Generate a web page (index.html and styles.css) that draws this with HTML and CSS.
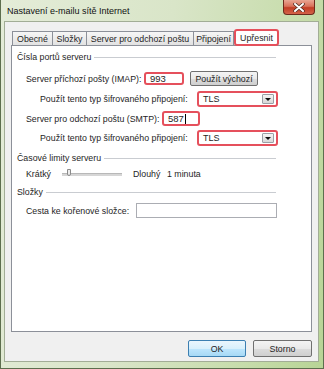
FILE: index.html
```html
<!DOCTYPE html>
<html lang="cs">
<head>
  <meta charset="UTF-8" />
  <title>Nastavení e-mailu sítě Internet</title>
  <link rel="stylesheet" href="styles.css">
</head>
<body>

<div class="window">
  <div class="titlebar">
    <span class="title">Nastavení e-mailu sítě Internet</span>
    <div class="close-btn">
      <svg width="12" height="9" viewBox="0 0 12 9">
        <path d="M2 1 L10 8 M10 1 L2 8" stroke="#4a2a20" stroke-width="3.4" stroke-linecap="round" />
        <path d="M2 1 L10 8 M10 1 L2 8" stroke="#fff" stroke-width="2" stroke-linecap="round" />
      </svg>
    </div>
  </div>

  <div class="client">
    <div class="tabs">
      <div class="tab w-obecne">Obecné</div>
      <div class="tab w-slozky">Složky</div>
      <div class="tab w-server">Server pro odchozí poštu</div>
      <div class="tab w-pripojeni">Připojení</div>
      <div class="tab active">Upřesnit</div>
    </div>

    <div class="panel">
      <div class="group-head g-ports"><span>Čísla portů serveru</span><i class="rule"></i></div>

      <div class="row r-imap">
        <span class="label l-imap">Server příchozí pošty (IMAP):</span>
        <div class="field marked w-imap">993</div>
        <div class="btn b-default">Použít výchozí</div>
      </div>

      <div class="row r-combo1 indent">
        <span class="label l-combo">Použít tento typ šifrovaného připojení:</span>
        <div class="combo marked"><span>TLS</span><div class="drop"><i></i></div></div>
      </div>

      <div class="row r-smtp">
        <span class="label l-smtp">Server pro odchozí poštu (SMTP):</span>
        <div class="field marked w-smtp">587<i class="caret"></i></div>
      </div>

      <div class="row r-combo2 indent">
        <span class="label l-combo">Použít tento typ šifrovaného připojení:</span>
        <div class="combo marked"><span>TLS</span><div class="drop"><i></i></div></div>
      </div>

      <div class="group-head g-time"><span>Časové limity serveru</span><i class="rule"></i></div>

      <div class="row r-slider">
        <span class="label l-short">Krátký</span>
        <div class="slider"><i class="thumb"></i></div>
        <span class="label l-long">Dlouhý</span>
        <span class="label">1 minuta</span>
      </div>

      <div class="group-head g-folders"><span>Složky</span><i class="rule"></i></div>

      <div class="row r-path">
        <span class="label l-path">Cesta ke kořenové složce:</span>
        <div class="field plain w-path"></div>
      </div>
    </div>

    <div class="actions">
      <div class="btn b-ok">OK</div>
      <div class="btn b-cancel">Storno</div>
    </div>
  </div>
</div>

</body>
</html>
```

FILE: styles.css
```css
body {
  margin: 0;
  padding: 0;
  font-family: 'Liberation Sans', Arial, sans-serif;
  font-size: 8.8px;
  color: #1e1e1e;
  background-color: #b9d39a;
}

.window {
  width: 324px;
  height: 369px;
  box-sizing: border-box;
  display: flex;
  flex-direction: column;
  border: 1px solid #5d6e4e;
  border-top: none;
  background: linear-gradient(100deg, #e4ecd8 0%, #d9e5c8 45%, #c6dcaa 80%, #b8d496 100%);
  overflow: hidden;
}

.titlebar {
  height: 21px;
  display: flex;
  align-items: center;
  position: relative;
  padding-left: 6px;
}

.title {
  font-size: 9px;
  color: #111;
}

.close-btn {
  position: absolute;
  top: 0;
  right: 8px;
  width: 32px;
  height: 15px;
  box-sizing: border-box;
  border: 1px solid #6e2a1c;
  border-top: none;
  border-radius: 0 0 4px 4px;
  background: linear-gradient(#e9a693 0%, #d9715a 45%, #c23d24 55%, #d4644a 100%);
  display: flex;
  align-items: center;
  justify-content: center;
}

.client {
  flex: 1;
  margin: 0 4px 6px 3px;
  background-color: #f0f0f0;
  border: 1px solid #a2ad96;
  display: flex;
  flex-direction: column;
  padding: 8px 6px 0 6px;
}

/* tabs */

.tabs {
  display: flex;
  align-items: flex-end;
  height: 15px;
  padding-left: 1px;
  position: relative;
  z-index: 2;
}

.tab {
  height: 14px;
  box-sizing: border-box;
  border: 1px solid #8c9099;
  border-bottom: none;
  margin-right: -1px;
  background: linear-gradient(#f6f6f6, #e2e2e2);
  display: flex;
  align-items: center;
  justify-content: center;
}

.w-obecne { width: 41px; }
.w-slozky { width: 35px; }
.w-server { width: 108px; }
.w-pripojeni { width: 41px; }

.tab.active {
  width: 45px;
  height: 17px;
  margin-left: 1px;
  margin-bottom: -1px;
  background-color: #fff;
  background-image: none;
  border: 2px solid #e5505c;
  border-radius: 3px;
}

.panel {
  height: 287px;
  box-sizing: border-box;
  background-color: #fff;
  border: 1px solid #8c9099;
  padding-top: 5px;
  display: flex;
  flex-direction: column;
}

.group-head {
  height: 12px;
  display: flex;
  align-items: center;
  padding-left: 5px;
  padding-right: 35px;
}

.group-head .rule {
  flex: 1;
  height: 1px;
  margin-left: 3px;
  background-color: #c9ccd1;
}

.g-time { margin-top: 6px; }
.g-folders { margin-top: 6px; }

.row {
  display: flex;
  align-items: center;
  padding-left: 14px;
}

.row.indent { padding-left: 28px; }

.r-imap { margin-top: 8px; height: 15px; }
.r-combo1 { margin-top: 5px; height: 16px; }
.r-smtp { margin-top: 4px; height: 15px; }
.r-combo2 { margin-top: 4px; height: 16px; }
.r-slider { margin-top: 4px; height: 12px; }
.r-path { margin-top: 5px; height: 15px; }

.label { white-space: nowrap; }

.l-imap { width: 118px; }
.l-combo { width: 157px; }
.l-smtp { width: 136px; }
.l-path { width: 110px; }
.l-short { width: 36px; }
.l-long { width: 34px; }

.field {
  height: 14px;
  box-sizing: border-box;
  background-color: #fff;
  display: flex;
  align-items: center;
  font-size: 9.5px;
  position: relative;
}

.field.marked {
  border: 2px solid #e5505c;
  border-radius: 3px;
  padding-left: 4px;
}

.field.plain {
  height: 15px;
  border: 1px solid #abadb3;
}

.w-imap { width: 40px; height: 13px; }
.w-smtp { width: 38px; height: 15px; }
.w-path { width: 141px; }

.caret {
  width: 1px;
  height: 10px;
  background-color: #000;
  margin-left: 1px;
}

.combo {
  width: 81px;
  height: 16px;
  box-sizing: border-box;
  border: 2px solid #e5505c;
  border-radius: 3px;
  background-color: #fff;
  display: flex;
  align-items: center;
  padding-left: 4px;
  padding-right: 2px;
  font-size: 9px;
}

.combo span { flex: 1; }

.drop {
  width: 12px;
  height: 10px;
  box-sizing: border-box;
  border: 1px solid #9aa0a6;
  border-radius: 1px;
  background: linear-gradient(#f4f4f4, #d8d8d8);
  display: flex;
  align-items: center;
  justify-content: center;
}

.drop i {
  width: 0;
  height: 0;
  border-left: 3px solid transparent;
  border-right: 3px solid transparent;
  border-top: 3px solid #111;
}

.slider {
  width: 60px;
  height: 2px;
  margin-right: 11px;
  background-color: #d6d6d6;
  border-top: 1px solid #b8b8b8;
  position: relative;
}

.thumb {
  position: absolute;
  left: 5px;
  top: -5px;
  width: 4px;
  height: 7px;
  box-sizing: border-box;
  border: 1px solid #8a8a8a;
  border-radius: 0 0 2px 2px;
  background-color: #ececec;
}

/* buttons */

.btn {
  height: 17px;
  box-sizing: border-box;
  border: 1px solid #707070;
  border-radius: 2px;
  background: linear-gradient(#f4f4f4 0%, #e9e9e9 50%, #dcdcdc 51%, #cfcfcf 100%);
  display: flex;
  align-items: center;
  justify-content: center;
}

.b-default {
  width: 68px;
  height: 15px;
  margin-left: 6px;
}

.actions {
  display: flex;
  justify-content: flex-end;
  gap: 7px;
  margin-top: 8px;
}

.b-ok {
  width: 58px;
  border-color: #3c7fb1;
  background: linear-gradient(#eaf6fd 0%, #d9f0fc 50%, #bee6fd 51%, #a7d9f5 100%);
}

.b-cancel { width: 59px; }
```
